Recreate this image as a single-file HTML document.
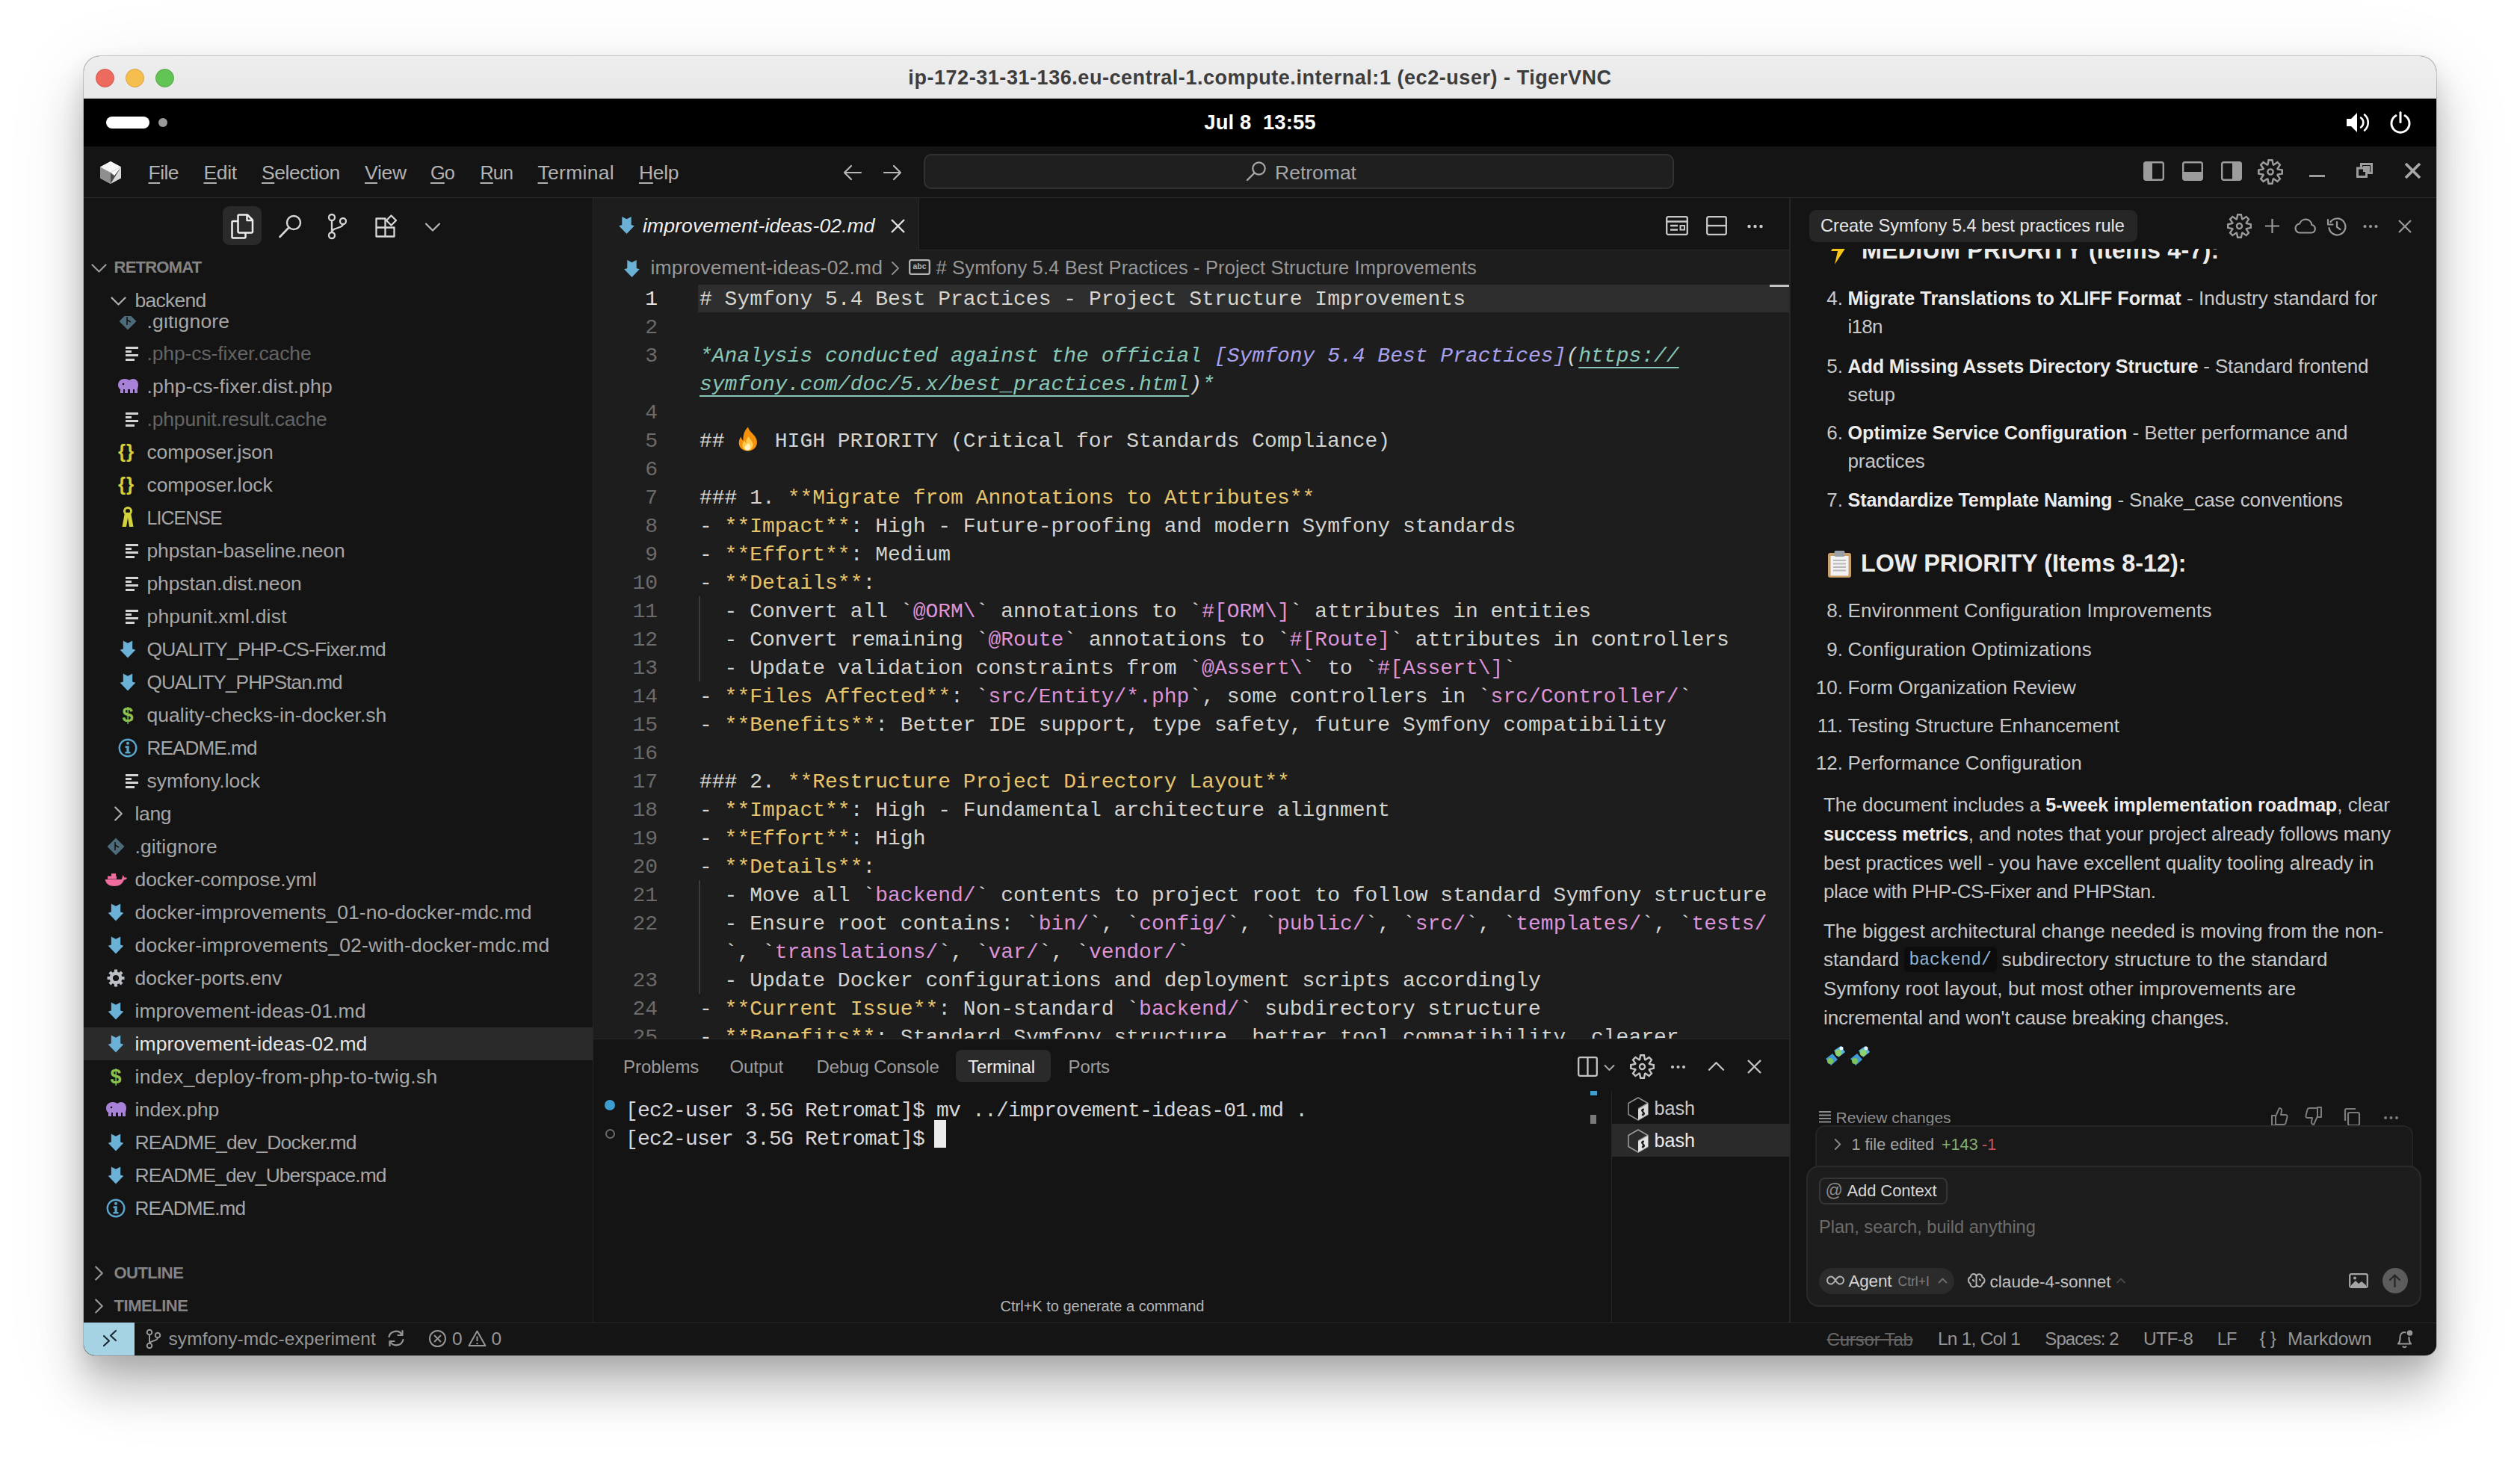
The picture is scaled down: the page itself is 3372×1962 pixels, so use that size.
<!DOCTYPE html>
<html lang="en"><head><meta charset="utf-8"><title>Retromat - Cursor</title>
<style>
html,body{margin:0;padding:0;}
body{width:3372px;height:1962px;overflow:hidden;background:#fff;position:relative;font-family:'Liberation Sans', 'DejaVu Sans', sans-serif;}
*{box-sizing:border-box;}
.abs{position:absolute;}
#win{position:absolute;left:112px;top:75px;width:3148px;height:1739px;border-radius:22px 22px 15px 15px;background:#141414;
 box-shadow:0 0 0 1px rgba(0,0,0,.16),0 45px 60px rgba(0,0,0,.20),0 15px 30px rgba(0,0,0,.11),0 25px 110px rgba(0,0,0,.10);}
#clip{position:absolute;left:0;top:0;width:100%;height:100%;border-radius:22px 22px 15px 15px;overflow:hidden;}
#pg{position:absolute;left:-112px;top:-75px;width:3372px;height:1962px;}
.t{position:absolute;white-space:pre;}
svg{position:absolute;overflow:visible;}
u{text-decoration:underline;text-underline-offset:4px;text-decoration-thickness:2px;}
.cl{position:absolute;overflow:hidden;}
</style></head><body>
<div id="win"><div id="clip"><div id="pg">
<div class="abs" style="left:112px;top:75px;width:3148px;height:57px;background:linear-gradient(#eeedee,#e9e8e9);"></div>
<div class="abs" style="left:112px;top:131px;width:3148px;height:1px;background:#d0cfd0;"></div>
<div class="abs" style="left:127.5px;top:91.5px;width:25px;height:25px;border-radius:50%;background:#ed6a5f;border:1px solid #d5554b;"></div>
<div class="abs" style="left:167.5px;top:91.5px;width:25px;height:25px;border-radius:50%;background:#f5be4f;border:1px solid #d9a33e;"></div>
<div class="abs" style="left:207.5px;top:91.5px;width:25px;height:25px;border-radius:50%;background:#62c454;border:1px solid #51a743;"></div>
<div class="t" style="left:112px;width:3148px;top:84px;text-align:center;font-size:27px;line-height:40px;font-weight:bold;color:#3d3d3d;letter-spacing:0.55px;">ip-172-31-31-136.eu-central-1.compute.internal:1 (ec2-user) - TigerVNC</div>
<div class="abs" style="left:112px;top:132px;width:3148px;height:64px;background:#000;"></div>
<div class="abs" style="left:142px;top:156px;width:58px;height:16px;background:#fff;border-radius:8px;"></div>
<div class="abs" style="left:212px;top:158px;width:12px;height:12px;border-radius:50%;background:#9a9a9a;"></div>
<div class="t" style="left:112px;width:3148px;top:144px;text-align:center;font-size:27.500px;line-height:40px;font-weight:bold;color:#fff;letter-spacing:0.1px;word-spacing:0px;">Jul 8  13:55</div>
<svg style="left:3137px;top:148px;" width="40" height="32" viewBox="0 0 40 32" fill="none"><path d="M3 11h6l8-8v26l-8-8H3z" fill="#fff"/>
<path d="M22 9.5a8 8 0 0 1 0 13" stroke="#fff" stroke-width="2.6" stroke-linecap="round"/>
<path d="M27 5.5a14 14 0 0 1 0 21" stroke="#fff" stroke-width="2.6" stroke-linecap="round"/></svg>
<svg style="left:3196px;top:148px;" width="32" height="32" viewBox="0 0 32 32" fill="none"><path d="M10 6.8a12 12 0 1 0 12 0" stroke="#fff" stroke-width="3" stroke-linecap="round"/>
<path d="M16 2.5v13" stroke="#fff" stroke-width="3" stroke-linecap="round"/></svg>
<div class="abs" style="left:112px;top:196px;width:3148px;height:68px;background:#141414;"></div>
<div class="abs" style="left:112px;top:264px;width:3148px;height:1px;background:#2a2a2a;"></div>
<svg style="left:133px;top:215px;" width="30" height="32" viewBox="0 0 30 32" fill="none"><path d="M15 1L29 8.5V23.5L15 31L1 23.5V8.5z" fill="#d9d9d9"/>
<path d="M15 1L29 8.5L15 16L1 8.5z" fill="#f4f4f4"/>
<path d="M1 8.5L15 16V31L1 23.5z" fill="#8f8f8f"/>
<path d="M15 16L29 8.5L15 31z" fill="#4a4a4a"/>
<path d="M15 16L29 8.5L20 20z" fill="#fff"/></svg>
<div class="t " style="left:198.5px;top:212.5px;font-size:26.50px;line-height:37px;color:#b2b2b2;letter-spacing:-0.551px;"><u>F</u>ile</div>
<div class="t " style="left:272.5px;top:212.5px;font-size:26.50px;line-height:37px;color:#b2b2b2;letter-spacing:-0.322px;"><u>E</u>dit</div>
<div class="t " style="left:350px;top:212.5px;font-size:26.50px;line-height:37px;color:#b2b2b2;letter-spacing:-0.470px;"><u>S</u>election</div>
<div class="t " style="left:488px;top:212.5px;font-size:26.50px;line-height:37px;color:#b2b2b2;letter-spacing:-0.242px;"><u>V</u>iew</div>
<div class="t " style="left:576px;top:212.5px;font-size:25.32px;line-height:37px;color:#b2b2b2;letter-spacing:-0.900px;"><u>G</u>o</div>
<div class="t " style="left:642.5px;top:212.5px;font-size:25.23px;line-height:37px;color:#b2b2b2;letter-spacing:-0.900px;"><u>R</u>un</div>
<div class="t " style="left:719.5px;top:212.5px;font-size:26.50px;line-height:37px;color:#b2b2b2;letter-spacing:0.270px;"><u>T</u>erminal</div>
<div class="t " style="left:855px;top:212.5px;font-size:26.50px;line-height:37px;color:#b2b2b2;letter-spacing:-0.329px;"><u>H</u>elp</div>
<svg style="left:0;top:0" width="1" height="1"><path d="M1152 231H1130M1139 222L1130 231L1139 240" stroke="#b8b8b8" stroke-width="2.2" fill="none" stroke-linecap="round" stroke-linejoin="round"/></svg>
<svg style="left:0;top:0" width="1" height="1"><path d="M1183 231H1205M1196 222L1205 231L1196 240" stroke="#b8b8b8" stroke-width="2.2" fill="none" stroke-linecap="round" stroke-linejoin="round"/></svg>
<div class="abs" style="left:1236px;top:206px;width:1004px;height:47px;border-radius:10px;background:#1f1f1f;border:2px solid #313131;"></div>
<svg style="left:1666px;top:214px;" width="30" height="30" viewBox="0 0 30 30" fill="none"><circle cx="18.5" cy="11.5" r="8.2" stroke="#a8a8a8" stroke-width="2.2"/><path d="M12.5 17.5L3 27" stroke="#a8a8a8" stroke-width="2.4" stroke-linecap="round"/></svg>
<div class="t " style="left:1706px;top:212.5px;font-size:26.5px;line-height:37px;color:#a6a6a6;">Retromat</div>
<svg style="left:2868px;top:216px;" width="28" height="26" viewBox="0 0 28 26" fill="none"><rect x="1.2" y="1.2" width="25.6" height="23.6" rx="2.5" stroke="#9c9c9c" stroke-width="2.4"/><rect x="1" y="1" width="11" height="24" fill="#9c9c9c"/></svg>
<svg style="left:2920px;top:216px;" width="28" height="26" viewBox="0 0 28 26" fill="none"><rect x="1.2" y="1.2" width="25.6" height="23.6" rx="2.5" stroke="#9c9c9c" stroke-width="2.4"/><rect x="1" y="14" width="26" height="11" fill="#9c9c9c"/></svg>
<svg style="left:2972px;top:216px;" width="28" height="26" viewBox="0 0 28 26" fill="none"><rect x="1.2" y="1.2" width="25.6" height="23.6" rx="2.5" stroke="#9c9c9c" stroke-width="2.4"/><rect x="15" y="1" width="12" height="24" fill="#9c9c9c"/></svg>
<svg style="left:3021.0px;top:213.0px;" width="34" height="34" viewBox="0 0 24 24" fill="none"><path d="M19.85 8.75l4.15.83v4.84l-4.15.83 2.35 3.52-3.43 3.43-3.52-2.35-.83 4.15H9.58l-.83-4.15-3.52 2.35-3.43-3.43 2.35-3.52L0 14.42V9.58l4.15-.83L1.8 5.23 5.23 1.8l3.52 2.35L9.58 0h4.84l.83 4.15 3.52-2.35 3.43 3.43-2.35 3.52zm-1.57 5.07l4-.81v-2l-4-.81-.54-1.3 2.29-3.43-1.43-1.43-3.43 2.29-1.3-.54-.81-4h-2l-.81 4-1.3.54-3.43-2.29-1.43 1.43L6.38 8.9l-.54 1.3-4 .81v2l4 .81.54 1.3-2.29 3.43 1.43 1.43 3.43-2.29 1.3.54.81 4h2l.81-4 1.3-.54 3.43 2.29 1.43-1.43-2.29-3.43.54-1.3zm-8.186-4.672A3.43 3.43 0 0 1 12 8.57 3.44 3.44 0 0 1 15.43 12a3.43 3.43 0 1 1-5.336-2.852zm.956 4.274c.281.188.612.288.95.288A1.7 1.7 0 0 0 13.71 12a1.71 1.71 0 1 0-2.66 1.422z" fill="#9c9c9c"/></svg>
<div class="abs" style="left:3090px;top:234px;width:20.5px;height:3px;background:#9c9c9c;"></div>
<svg style="left:3153px;top:217.5px;" width="22" height="20" viewBox="0 0 22 20" fill="none"><rect x="1.500" y="7" width="12" height="11.500" stroke="#9c9c9c" stroke-width="3"/><path d="M6.500 6V1.500h14v12h-6" stroke="#9c9c9c" stroke-width="3"/><rect x="9" y="4" width="9" height="8" fill="#9c9c9c"/></svg>
<svg style="left:3218.5px;top:218.5px;" width="19.0" height="19.0" viewBox="0 0 19.0 19.0" fill="none"><path d="M0 0L19.0 19.0M19.0 0L0 19.0" stroke="#a8a8a8" stroke-width="3.8" stroke-linecap="butt"/></svg>
<div class="abs" style="left:112px;top:265px;width:681px;height:1505px;background:#141414;"></div>
<div class="abs" style="left:793px;top:265px;width:2px;height:1505px;background:#262626;"></div>
<div class="abs" style="left:298px;top:276px;width:52px;height:52px;background:#2a2a2a;border-radius:9px;"></div>
<svg style="left:307px;top:285px;" width="34" height="36" viewBox="0 0 34 36" fill="none"><path d="M13 2.5h11l7 7v15.5a1.5 1.5 0 0 1-1.500 1.5H13a1.5 1.500 0 0 1-1.500-1.500V4a1.500 1.500 0 0 1 1.500-1.500z" stroke="#ededed" stroke-width="2.500" stroke-linejoin="round"/>
<path d="M23.500 3v7h7" stroke="#ededed" stroke-width="2.500" stroke-linejoin="round"/>
<path d="M11 11H5a1.500 1.500 0 0 0-1.500 1.500V32a1.500 1.500 0 0 0 1.500 1.500h15a1.500 1.500 0 0 0 1.500-1.500v-5" stroke="#ededed" stroke-width="2.500" stroke-linejoin="round"/></svg>
<svg style="left:372px;top:286px;" width="34" height="34" viewBox="0 0 34 34" fill="none"><circle cx="21" cy="12" r="9" stroke="#d6d6d6" stroke-width="2.400"/><path d="M14.500 18.500L2.500 31" stroke="#d6d6d6" stroke-width="2.600" stroke-linecap="round"/></svg>
<svg style="left:438px;top:286px;" width="28" height="34" viewBox="0 0 28 34" fill="none"><circle cx="6" cy="5" r="4" stroke="#d6d6d6" stroke-width="2.300"/><circle cx="6" cy="29" r="4" stroke="#d6d6d6" stroke-width="2.300"/><circle cx="21" cy="10" r="4" stroke="#d6d6d6" stroke-width="2.300"/>
<path d="M6 9v16M21 14c0 6-15 4-15 11" stroke="#d6d6d6" stroke-width="2.300"/></svg>
<svg style="left:502px;top:287px;" width="30" height="30" viewBox="0 0 30 30" fill="none"><path d="M1.500 5.500h12v24h-12zM1.500 17.500h24v12h-24zM13.500 17.500v12" stroke="#d6d6d6" stroke-width="2.300" stroke-linejoin="round"/>
<path d="M21.500 1.500l6.500 6.500-6.500 6.500-6.500-6.500z" stroke="#d6d6d6" stroke-width="2.300" stroke-linejoin="round"/></svg>
<svg style="left:0;top:0" width="1" height="1"><path d="M570 299.5L579 308.5L588 299.5" stroke="#b8b8b8" stroke-width="2.2" fill="none" stroke-linecap="round" stroke-linejoin="round"/></svg>
<div class="cl" style="left:112px;top:423px;width:681px;height:30px;"><div style="position:absolute;left:-112px;top:-423px;">
<svg style="left:0;top:0" width="1" height="1"><path d="M171 418.5L182.5 430L171 441.5L159.5 430z" fill="#4e6b79"/><path d="M170 424v11M170 428l5 3" stroke="#141414" stroke-width="1.600" fill="none"/></svg>
<div class="t " style="left:196.5px;top:411.5px;font-size:26.50px;line-height:37px;color:#a6a6a6;letter-spacing:0.168px;">.gitignore</div>
</div></div>
<div class="abs" style="left:167.5px;top:463.5px;width:17.0px;height:3.0px;background:#d4d4d4;"></div>
<div class="abs" style="left:167.5px;top:468.5px;width:8.0px;height:3.0px;background:#d4d4d4;"></div>
<div class="abs" style="left:167.5px;top:473.5px;width:17.0px;height:3.0px;background:#d4d4d4;"></div>
<div class="abs" style="left:167.5px;top:479.5px;width:12.5px;height:3.0px;background:#d4d4d4;"></div>
<div class="t " style="left:196.5px;top:454.5px;font-size:26.50px;line-height:37px;color:#646464;letter-spacing:-0.121px;">.php-cs-fixer.cache</div>
<svg style="left:156px;top:506px;" width="30" height="22" viewBox="0 0 30 22" fill="none"><path d="M2 9c0-5 4-8 9-8 3 0 5 1 6 2 1-1 3-2 5-2 4 0 7 3 7 8 0 3-1 4-1 6v5h-4v-5h-2v5h-4v-5c-1 0-2 0-3 0v5H11v-5H9v5H5v-5c-2-1-3-3-3-6z" fill="#a882d8"/><circle cx="9" cy="8" r="1.300" fill="#141414"/></svg>
<div class="t " style="left:196.5px;top:498.5px;font-size:26.50px;line-height:37px;color:#a6a6a6;letter-spacing:0.172px;">.php-cs-fixer.dist.php</div>
<div class="abs" style="left:167.5px;top:551.5px;width:17.0px;height:3.0px;background:#d4d4d4;"></div>
<div class="abs" style="left:167.5px;top:556.5px;width:8.0px;height:3.0px;background:#d4d4d4;"></div>
<div class="abs" style="left:167.5px;top:561.5px;width:17.0px;height:3.0px;background:#d4d4d4;"></div>
<div class="abs" style="left:167.5px;top:567.5px;width:12.5px;height:3.0px;background:#d4d4d4;"></div>
<div class="t " style="left:196.5px;top:542.5px;font-size:26.50px;line-height:37px;color:#646464;letter-spacing:-0.164px;">.phpunit.result.cache</div>
<div class="t " style="left:158px;top:586.0px;font-size:26px;line-height:36px;color:#d6cf3d;font-weight:bold;letter-spacing:1px;">{}</div>
<div class="t " style="left:196.5px;top:586.5px;font-size:26.50px;line-height:37px;color:#a6a6a6;letter-spacing:-0.144px;">composer.json</div>
<div class="t " style="left:158px;top:630.0px;font-size:26px;line-height:36px;color:#d6cf3d;font-weight:bold;letter-spacing:1px;">{}</div>
<div class="t " style="left:196.5px;top:630.5px;font-size:26.50px;line-height:37px;color:#a6a6a6;letter-spacing:-0.099px;">composer.lock</div>
<svg style="left:161px;top:678px;" width="20" height="30" viewBox="0 0 20 30" fill="none"><circle cx="10" cy="6" r="4.500" stroke="#d4d23c" stroke-width="3"/>
<path d="M6 8L2.500 27h5.500L10 15l2 12h5.500L14 8z" fill="#d4d23c"/></svg>
<div class="t " style="left:196.5px;top:674.5px;font-size:24.91px;line-height:37px;color:#a6a6a6;letter-spacing:-0.900px;">LICENSE</div>
<div class="abs" style="left:167.5px;top:727.5px;width:17.0px;height:3.0px;background:#d4d4d4;"></div>
<div class="abs" style="left:167.5px;top:732.5px;width:8.0px;height:3.0px;background:#d4d4d4;"></div>
<div class="abs" style="left:167.5px;top:737.5px;width:17.0px;height:3.0px;background:#d4d4d4;"></div>
<div class="abs" style="left:167.5px;top:743.5px;width:12.5px;height:3.0px;background:#d4d4d4;"></div>
<div class="t " style="left:196.5px;top:718.5px;font-size:26.50px;line-height:37px;color:#a6a6a6;letter-spacing:-0.151px;">phpstan-baseline.neon</div>
<div class="abs" style="left:167.5px;top:771.5px;width:17.0px;height:3.0px;background:#d4d4d4;"></div>
<div class="abs" style="left:167.5px;top:776.5px;width:8.0px;height:3.0px;background:#d4d4d4;"></div>
<div class="abs" style="left:167.5px;top:781.5px;width:17.0px;height:3.0px;background:#d4d4d4;"></div>
<div class="abs" style="left:167.5px;top:787.5px;width:12.5px;height:3.0px;background:#d4d4d4;"></div>
<div class="t " style="left:196.5px;top:762.5px;font-size:26.50px;line-height:37px;color:#a6a6a6;letter-spacing:-0.119px;">phpstan.dist.neon</div>
<div class="abs" style="left:167.5px;top:815.5px;width:17.0px;height:3.0px;background:#d4d4d4;"></div>
<div class="abs" style="left:167.5px;top:820.5px;width:8.0px;height:3.0px;background:#d4d4d4;"></div>
<div class="abs" style="left:167.5px;top:825.5px;width:17.0px;height:3.0px;background:#d4d4d4;"></div>
<div class="abs" style="left:167.5px;top:831.5px;width:12.5px;height:3.0px;background:#d4d4d4;"></div>
<div class="t " style="left:196.5px;top:806.5px;font-size:26.50px;line-height:37px;color:#a6a6a6;letter-spacing:0.192px;">phpunit.xml.dist</div>
<svg style="left:0;top:0" width="1" height="1"><path d="M164.8 857.5L171 860.8L177.2 857.5L177.2 868.5L181.3 869.8L171 880.5L160.7 869.8L164.8 868.5z" fill="#6bb1d6"/></svg>
<div class="t " style="left:196.5px;top:850.5px;font-size:26.50px;line-height:37px;color:#a6a6a6;letter-spacing:-0.834px;">QUALITY_PHP-CS-Fixer.md</div>
<svg style="left:0;top:0" width="1" height="1"><path d="M164.8 901.5L171 904.8L177.2 901.5L177.2 912.5L181.3 913.8L171 924.5L160.7 913.8L164.8 912.5z" fill="#6bb1d6"/></svg>
<div class="t " style="left:196.5px;top:894.5px;font-size:26.13px;line-height:37px;color:#a6a6a6;letter-spacing:-0.900px;">QUALITY_PHPStan.md</div>
<div class="t " style="left:163.5px;top:938.5px;font-size:27px;line-height:37px;color:#8dc149;font-weight:bold;">$</div>
<div class="t " style="left:196.5px;top:938.5px;font-size:26.50px;line-height:37px;color:#a6a6a6;letter-spacing:0.048px;">quality-checks-in-docker.sh</div>
<svg style="left:158px;top:988px;" width="26" height="26" viewBox="0 0 26 26" fill="none"><circle cx="13" cy="13" r="11.300" stroke="#5aa6cf" stroke-width="2.400"/><rect x="11.400" y="10.500" width="3.200" height="9.500" fill="#5aa6cf"/><rect x="9.500" y="10.500" width="5" height="2.400" fill="#5aa6cf"/><rect x="9.500" y="18" width="7" height="2.400" fill="#5aa6cf"/><circle cx="13" cy="6.800" r="2" fill="#5aa6cf"/></svg>
<div class="t " style="left:196.5px;top:982.5px;font-size:26.10px;line-height:37px;color:#a6a6a6;letter-spacing:-0.900px;">README.md</div>
<div class="abs" style="left:167.5px;top:1035.5px;width:17.0px;height:3.0px;background:#d4d4d4;"></div>
<div class="abs" style="left:167.5px;top:1040.5px;width:8.0px;height:3.0px;background:#d4d4d4;"></div>
<div class="abs" style="left:167.5px;top:1045.5px;width:17.0px;height:3.0px;background:#d4d4d4;"></div>
<div class="abs" style="left:167.5px;top:1051.5px;width:12.5px;height:3.0px;background:#d4d4d4;"></div>
<div class="t " style="left:196.5px;top:1026.5px;font-size:26.50px;line-height:37px;color:#a6a6a6;letter-spacing:0.018px;">symfony.lock</div>
<svg style="left:0;top:0" width="1" height="1"><path d="M154.25 1080.5L162.75 1089L154.25 1097.5" stroke="#b0b0b0" stroke-width="2.2" fill="none" stroke-linecap="round" stroke-linejoin="round"/></svg>
<div class="t " style="left:180.5px;top:1070.5px;font-size:26.50px;line-height:37px;color:#a6a6a6;letter-spacing:-0.352px;">lang</div>
<svg style="left:0;top:0" width="1" height="1"><path d="M155 1121.5L166.5 1133L155 1144.5L143.5 1133z" fill="#4e6b79"/><path d="M154 1127v11M154 1131l5 3" stroke="#141414" stroke-width="1.600" fill="none"/></svg>
<div class="t " style="left:180.5px;top:1114.5px;font-size:26.50px;line-height:37px;color:#a6a6a6;letter-spacing:0.128px;">.gitignore</div>
<svg style="left:140px;top:1167px;" width="30" height="20" viewBox="0 0 30 20" fill="none"><path d="M0.500 10h22c1-2 2-4 1.500-6 1 0.500 2 2 2.500 3.500 1.500-0.500 2.500 0 3.500 0.500-1 2-2.500 2.500-4 2.500-2 5-6 8.500-13 8.500-7 0-11-3-12.500-9z" fill="#ee6c9e"/>
<rect x="9" y="2" width="6" height="7" fill="#ee6c9e"/><rect x="4" y="5.500" width="12" height="4" fill="#ee6c9e"/></svg>
<div class="t " style="left:180.5px;top:1158.5px;font-size:26.50px;line-height:37px;color:#a6a6a6;letter-spacing:-0.076px;">docker-compose.yml</div>
<svg style="left:0;top:0" width="1" height="1"><path d="M148.8 1209.5L155 1212.8L161.2 1209.5L161.2 1220.5L165.3 1221.8L155 1232.5L144.7 1221.8L148.8 1220.5z" fill="#6bb1d6"/></svg>
<div class="t " style="left:180.5px;top:1202.5px;font-size:26.50px;line-height:37px;color:#a6a6a6;letter-spacing:0.061px;">docker-improvements_01-no-docker-mdc.md</div>
<svg style="left:0;top:0" width="1" height="1"><path d="M148.8 1253.5L155 1256.8L161.2 1253.5L161.2 1264.5L165.3 1265.8L155 1276.5L144.7 1265.8L148.8 1264.5z" fill="#6bb1d6"/></svg>
<div class="t " style="left:180.5px;top:1246.5px;font-size:26.50px;line-height:37px;color:#a6a6a6;letter-spacing:0.208px;">docker-improvements_02-with-docker-mdc.md</div>
<svg style="left:143px;top:1297px;" width="24" height="24" viewBox="0 0 24 24" fill="none"><circle cx="12" cy="12" r="6.300" stroke="#b9bfc4" stroke-width="4.400"/>
<g stroke="#b9bfc4" stroke-width="4.200"><path d="M12 0.500v4M12 19.500v4M0.500 12h4M19.500 12h4M3.900 3.900l2.800 2.800M17.300 17.300l2.800 2.800M3.900 20.100l2.800-2.800M17.300 6.700l2.800-2.800"/></g></svg>
<div class="t " style="left:180.5px;top:1290.5px;font-size:26.50px;line-height:37px;color:#a6a6a6;letter-spacing:-0.036px;">docker-ports.env</div>
<svg style="left:0;top:0" width="1" height="1"><path d="M148.8 1341.5L155 1344.8L161.2 1341.5L161.2 1352.5L165.3 1353.8L155 1364.5L144.7 1353.8L148.8 1352.5z" fill="#6bb1d6"/></svg>
<div class="t " style="left:180.5px;top:1334.5px;font-size:26.50px;line-height:37px;color:#a6a6a6;letter-spacing:0.051px;">improvement-ideas-01.md</div>
<div class="abs" style="left:112px;top:1375px;width:681px;height:44px;background:#2a2a2a;"></div>
<svg style="left:0;top:0" width="1" height="1"><path d="M148.8 1385.5L155 1388.8L161.2 1385.5L161.2 1396.5L165.3 1397.8L155 1408.5L144.7 1397.8L148.8 1396.5z" fill="#6bb1d6"/></svg>
<div class="t " style="left:180.5px;top:1378.5px;font-size:26.50px;line-height:37px;color:#e6e6e6;letter-spacing:0.138px;">improvement-ideas-02.md</div>
<div class="t " style="left:147.5px;top:1422.5px;font-size:27px;line-height:37px;color:#8dc149;font-weight:bold;">$</div>
<div class="t " style="left:180.5px;top:1422.5px;font-size:26.50px;line-height:37px;color:#a6a6a6;letter-spacing:0.372px;">index_deploy-from-php-to-twig.sh</div>
<svg style="left:140px;top:1474px;" width="30" height="22" viewBox="0 0 30 22" fill="none"><path d="M2 9c0-5 4-8 9-8 3 0 5 1 6 2 1-1 3-2 5-2 4 0 7 3 7 8 0 3-1 4-1 6v5h-4v-5h-2v5h-4v-5c-1 0-2 0-3 0v5H11v-5H9v5H5v-5c-2-1-3-3-3-6z" fill="#a882d8"/><circle cx="9" cy="8" r="1.300" fill="#141414"/></svg>
<div class="t " style="left:180.5px;top:1466.5px;font-size:26.50px;line-height:37px;color:#a6a6a6;letter-spacing:-0.282px;">index.php</div>
<svg style="left:0;top:0" width="1" height="1"><path d="M148.8 1517.5L155 1520.8L161.2 1517.5L161.2 1528.5L165.3 1529.8L155 1540.5L144.7 1529.8L148.8 1528.5z" fill="#6bb1d6"/></svg>
<div class="t " style="left:180.5px;top:1510.5px;font-size:26.50px;line-height:37px;color:#a6a6a6;letter-spacing:-0.802px;">README_dev_Docker.md</div>
<svg style="left:0;top:0" width="1" height="1"><path d="M148.8 1561.5L155 1564.8L161.2 1561.5L161.2 1572.5L165.3 1573.8L155 1584.5L144.7 1573.8L148.8 1572.5z" fill="#6bb1d6"/></svg>
<div class="t " style="left:180.5px;top:1554.5px;font-size:26.43px;line-height:37px;color:#a6a6a6;letter-spacing:-0.900px;">README_dev_Uberspace.md</div>
<svg style="left:142px;top:1604px;" width="26" height="26" viewBox="0 0 26 26" fill="none"><circle cx="13" cy="13" r="11.300" stroke="#5aa6cf" stroke-width="2.400"/><rect x="11.400" y="10.500" width="3.200" height="9.500" fill="#5aa6cf"/><rect x="9.500" y="10.500" width="5" height="2.400" fill="#5aa6cf"/><rect x="9.500" y="18" width="7" height="2.400" fill="#5aa6cf"/><circle cx="13" cy="6.800" r="2" fill="#5aa6cf"/></svg>
<div class="t " style="left:180.5px;top:1598.5px;font-size:26.19px;line-height:37px;color:#a6a6a6;letter-spacing:-0.900px;">README.md</div>
<svg style="left:0;top:0" width="1" height="1"><path d="M123.5 354.5L132.5 363.5L141.5 354.5" stroke="#9a9a9a" stroke-width="2.2" fill="none" stroke-linecap="round" stroke-linejoin="round"/></svg>
<div class="t " style="left:152.5px;top:343.0px;font-size:22.00px;line-height:30px;color:#848484;font-weight:bold;letter-spacing:-0.754px;">RETROMAT</div>
<svg style="left:0;top:0" width="1" height="1"><path d="M149.5 398.5L158.5 407.5L167.5 398.5" stroke="#b0b0b0" stroke-width="2.2" fill="none" stroke-linecap="round" stroke-linejoin="round"/></svg>
<div class="t " style="left:180.5px;top:383.5px;font-size:26.50px;line-height:37px;color:#a6a6a6;letter-spacing:-0.743px;">backend</div>
<svg style="left:0;top:0" width="1" height="1"><path d="M128.25 1695.5L136.75 1704L128.25 1712.5" stroke="#9a9a9a" stroke-width="2.2" fill="none" stroke-linecap="round" stroke-linejoin="round"/></svg>
<div class="t " style="left:152.5px;top:1689.0px;font-size:22.00px;line-height:30px;color:#848484;font-weight:bold;letter-spacing:-0.538px;">OUTLINE</div>
<svg style="left:0;top:0" width="1" height="1"><path d="M128.25 1739.5L136.75 1748L128.25 1756.5" stroke="#9a9a9a" stroke-width="2.2" fill="none" stroke-linecap="round" stroke-linejoin="round"/></svg>
<div class="t " style="left:152.5px;top:1733.0px;font-size:22.00px;line-height:30px;color:#848484;font-weight:bold;letter-spacing:-0.459px;">TIMELINE</div>
<div class="abs" style="left:794px;top:265px;width:1601px;height:1125px;background:#1d1d1d;"></div>
<div class="abs" style="left:1229px;top:265px;width:1166px;height:70px;background:#141414;"></div>
<div class="abs" style="left:1229px;top:265px;width:1px;height:70px;background:#2a2a2a;"></div>
<div class="abs" style="left:1230px;top:334px;width:1165px;height:1px;background:#2a2a2a;"></div>
<svg style="left:0;top:0" width="1" height="1"><path d="M832.3 290.0L838.5 293.3L844.7 290.0L844.7 301.0L848.8 302.3L838.5 313.0L828.2 302.3L832.3 301.0z" fill="#6bb1d6"/></svg>
<div class="t " style="left:860px;top:283.5px;font-size:26.50px;line-height:37px;color:#f0f0f0;font-style:italic;letter-spacing:0.125px;">improvement-ideas-02.md</div>
<svg style="left:1192.5px;top:294.0px;" width="17.0" height="17.0" viewBox="0 0 17.0 17.0" fill="none"><path d="M0 0L17.0 17.0M17.0 0L0 17.0" stroke="#e0e0e0" stroke-width="2.4" stroke-linecap="butt"/></svg>
<svg style="left:2229px;top:289px;" width="30" height="26" viewBox="0 0 30 26" fill="none"><rect x="1.200" y="1.200" width="27.600" height="23.600" rx="2" stroke="#c8c8c8" stroke-width="2.300"/>
<path d="M1 7.500h28M6 13h10M6 18.500h10" stroke="#c8c8c8" stroke-width="2.300"/><rect x="19.500" y="13" width="5.500" height="5.500" stroke="#c8c8c8" stroke-width="2"/></svg>
<svg style="left:2283px;top:289px;" width="28" height="26" viewBox="0 0 28 26" fill="none"><rect x="1.200" y="1.200" width="25.600" height="23.600" rx="2" stroke="#c8c8c8" stroke-width="2.300"/><path d="M1 13h26" stroke="#c8c8c8" stroke-width="2.300"/></svg>
<svg style="left:0;top:0" width="1" height="1"><circle cx="2340.5" cy="303" r="2.2" fill="#c8c8c8"/><circle cx="2348.5" cy="303" r="2.2" fill="#c8c8c8"/><circle cx="2356.5" cy="303" r="2.2" fill="#c8c8c8"/></svg>
<svg style="left:0;top:0" width="1" height="1"><path d="M839.3 348.0L845.5 351.3L851.7 348.0L851.7 359.0L855.8 360.3L845.5 371.0L835.2 360.3L839.3 359.0z" fill="#6bb1d6"/></svg>
<div class="t " style="left:870.5px;top:340.0px;font-size:26.50px;line-height:37px;color:#989898;letter-spacing:0.116px;">improvement-ideas-02.md</div>
<svg style="left:0;top:0" width="1" height="1"><path d="M1194.0 351L1202.0 359L1194.0 367" stroke="#8c8c8c" stroke-width="2" fill="none" stroke-linecap="round" stroke-linejoin="round"/></svg>
<svg style="left:1216px;top:346.5px;" width="29" height="21" viewBox="0 0 29 21" fill="none"><rect x="1.200" y="1.200" width="26.600" height="18.600" rx="2" stroke="#b4b4b4" stroke-width="2.300"/></svg>
<div class="t " style="left:1221.5px;top:349.0px;font-size:10.5px;line-height:14px;color:#b4b4b4;font-weight:bold;">abc</div>
<div class="t " style="left:1252.5px;top:341.0px;font-size:25.50px;line-height:35px;color:#989898;letter-spacing:0.151px;"># Symfony 5.4 Best Practices - Project Structure Improvements</div>
<div class="abs" style="left:934px;top:380.5px;width:1461px;height:37.5px;background:#2e2e2e;"></div>
<div class="cl" style="left:794px;top:380px;width:1601px;height:1010px;"><div style="position:absolute;left:-794px;top:-380px;">
<div class="t" style="left:780px;width:100px;text-align:right;top:382px;font-family:'Liberation Mono', 'DejaVu Sans Mono', monospace;font-size:28px;line-height:38px;color:#e6e6e6;">1</div>
<div class="t" style="left:780px;width:100px;text-align:right;top:420px;font-family:'Liberation Mono', 'DejaVu Sans Mono', monospace;font-size:28px;line-height:38px;color:#6b6b6b;">2</div>
<div class="t" style="left:780px;width:100px;text-align:right;top:458px;font-family:'Liberation Mono', 'DejaVu Sans Mono', monospace;font-size:28px;line-height:38px;color:#6b6b6b;">3</div>
<div class="t" style="left:780px;width:100px;text-align:right;top:534px;font-family:'Liberation Mono', 'DejaVu Sans Mono', monospace;font-size:28px;line-height:38px;color:#6b6b6b;">4</div>
<div class="t" style="left:780px;width:100px;text-align:right;top:572px;font-family:'Liberation Mono', 'DejaVu Sans Mono', monospace;font-size:28px;line-height:38px;color:#6b6b6b;">5</div>
<div class="t" style="left:780px;width:100px;text-align:right;top:610px;font-family:'Liberation Mono', 'DejaVu Sans Mono', monospace;font-size:28px;line-height:38px;color:#6b6b6b;">6</div>
<div class="t" style="left:780px;width:100px;text-align:right;top:648px;font-family:'Liberation Mono', 'DejaVu Sans Mono', monospace;font-size:28px;line-height:38px;color:#6b6b6b;">7</div>
<div class="t" style="left:780px;width:100px;text-align:right;top:686px;font-family:'Liberation Mono', 'DejaVu Sans Mono', monospace;font-size:28px;line-height:38px;color:#6b6b6b;">8</div>
<div class="t" style="left:780px;width:100px;text-align:right;top:724px;font-family:'Liberation Mono', 'DejaVu Sans Mono', monospace;font-size:28px;line-height:38px;color:#6b6b6b;">9</div>
<div class="t" style="left:780px;width:100px;text-align:right;top:762px;font-family:'Liberation Mono', 'DejaVu Sans Mono', monospace;font-size:28px;line-height:38px;color:#6b6b6b;">10</div>
<div class="t" style="left:780px;width:100px;text-align:right;top:800px;font-family:'Liberation Mono', 'DejaVu Sans Mono', monospace;font-size:28px;line-height:38px;color:#6b6b6b;">11</div>
<div class="t" style="left:780px;width:100px;text-align:right;top:838px;font-family:'Liberation Mono', 'DejaVu Sans Mono', monospace;font-size:28px;line-height:38px;color:#6b6b6b;">12</div>
<div class="t" style="left:780px;width:100px;text-align:right;top:876px;font-family:'Liberation Mono', 'DejaVu Sans Mono', monospace;font-size:28px;line-height:38px;color:#6b6b6b;">13</div>
<div class="t" style="left:780px;width:100px;text-align:right;top:914px;font-family:'Liberation Mono', 'DejaVu Sans Mono', monospace;font-size:28px;line-height:38px;color:#6b6b6b;">14</div>
<div class="t" style="left:780px;width:100px;text-align:right;top:952px;font-family:'Liberation Mono', 'DejaVu Sans Mono', monospace;font-size:28px;line-height:38px;color:#6b6b6b;">15</div>
<div class="t" style="left:780px;width:100px;text-align:right;top:990px;font-family:'Liberation Mono', 'DejaVu Sans Mono', monospace;font-size:28px;line-height:38px;color:#6b6b6b;">16</div>
<div class="t" style="left:780px;width:100px;text-align:right;top:1028px;font-family:'Liberation Mono', 'DejaVu Sans Mono', monospace;font-size:28px;line-height:38px;color:#6b6b6b;">17</div>
<div class="t" style="left:780px;width:100px;text-align:right;top:1066px;font-family:'Liberation Mono', 'DejaVu Sans Mono', monospace;font-size:28px;line-height:38px;color:#6b6b6b;">18</div>
<div class="t" style="left:780px;width:100px;text-align:right;top:1104px;font-family:'Liberation Mono', 'DejaVu Sans Mono', monospace;font-size:28px;line-height:38px;color:#6b6b6b;">19</div>
<div class="t" style="left:780px;width:100px;text-align:right;top:1142px;font-family:'Liberation Mono', 'DejaVu Sans Mono', monospace;font-size:28px;line-height:38px;color:#6b6b6b;">20</div>
<div class="t" style="left:780px;width:100px;text-align:right;top:1180px;font-family:'Liberation Mono', 'DejaVu Sans Mono', monospace;font-size:28px;line-height:38px;color:#6b6b6b;">21</div>
<div class="t" style="left:780px;width:100px;text-align:right;top:1218px;font-family:'Liberation Mono', 'DejaVu Sans Mono', monospace;font-size:28px;line-height:38px;color:#6b6b6b;">22</div>
<div class="t" style="left:780px;width:100px;text-align:right;top:1294px;font-family:'Liberation Mono', 'DejaVu Sans Mono', monospace;font-size:28px;line-height:38px;color:#6b6b6b;">23</div>
<div class="t" style="left:780px;width:100px;text-align:right;top:1332px;font-family:'Liberation Mono', 'DejaVu Sans Mono', monospace;font-size:28px;line-height:38px;color:#6b6b6b;">24</div>
<div class="t" style="left:780px;width:100px;text-align:right;top:1370px;font-family:'Liberation Mono', 'DejaVu Sans Mono', monospace;font-size:28px;line-height:38px;color:#6b6b6b;">25</div>
<div class="t" style="left:936.0px;top:382px;font-family:'Liberation Mono', 'DejaVu Sans Mono', monospace;font-size:28px;line-height:38px;color:#d4d4d0;"># Symfony 5.4 Best Practices - Project Structure Improvements</div>
<div class="t" style="left:936.0px;top:648px;font-family:'Liberation Mono', 'DejaVu Sans Mono', monospace;font-size:28px;line-height:38px;color:#d4d4d0;">### 1. <span style="color:#e6c46e">**Migrate from Annotations to Attributes**</span></div>
<div class="t" style="left:936.0px;top:686px;font-family:'Liberation Mono', 'DejaVu Sans Mono', monospace;font-size:28px;line-height:38px;color:#d4d4d0;">- <span style="color:#e6c46e">**Impact**</span>: High - Future-proofing and modern Symfony standards</div>
<div class="t" style="left:936.0px;top:724px;font-family:'Liberation Mono', 'DejaVu Sans Mono', monospace;font-size:28px;line-height:38px;color:#d4d4d0;">- <span style="color:#e6c46e">**Effort**</span>: Medium</div>
<div class="t" style="left:936.0px;top:762px;font-family:'Liberation Mono', 'DejaVu Sans Mono', monospace;font-size:28px;line-height:38px;color:#d4d4d0;">- <span style="color:#e6c46e">**Details**</span>:</div>
<div class="t" style="left:936.0px;top:800px;font-family:'Liberation Mono', 'DejaVu Sans Mono', monospace;font-size:28px;line-height:38px;color:#d4d4d0;">  - Convert all `<span style="color:#dc93d8">@ORM\</span>` annotations to `<span style="color:#dc93d8">#[ORM\]</span>` attributes in entities</div>
<div class="t" style="left:936.0px;top:838px;font-family:'Liberation Mono', 'DejaVu Sans Mono', monospace;font-size:28px;line-height:38px;color:#d4d4d0;">  - Convert remaining `<span style="color:#dc93d8">@Route</span>` annotations to `<span style="color:#dc93d8">#[Route]</span>` attributes in controllers</div>
<div class="t" style="left:936.0px;top:876px;font-family:'Liberation Mono', 'DejaVu Sans Mono', monospace;font-size:28px;line-height:38px;color:#d4d4d0;">  - Update validation constraints from `<span style="color:#dc93d8">@Assert\</span>` to `<span style="color:#dc93d8">#[Assert\]</span>`</div>
<div class="t" style="left:936.0px;top:914px;font-family:'Liberation Mono', 'DejaVu Sans Mono', monospace;font-size:28px;line-height:38px;color:#d4d4d0;">- <span style="color:#e6c46e">**Files Affected**</span>: `<span style="color:#dc93d8">src/Entity/*.php</span>`, some controllers in `<span style="color:#dc93d8">src/Controller/</span>`</div>
<div class="t" style="left:936.0px;top:952px;font-family:'Liberation Mono', 'DejaVu Sans Mono', monospace;font-size:28px;line-height:38px;color:#d4d4d0;">- <span style="color:#e6c46e">**Benefits**</span>: Better IDE support, type safety, future Symfony compatibility</div>
<div class="t" style="left:936.0px;top:1028px;font-family:'Liberation Mono', 'DejaVu Sans Mono', monospace;font-size:28px;line-height:38px;color:#d4d4d0;">### 2. <span style="color:#e6c46e">**Restructure Project Directory Layout**</span></div>
<div class="t" style="left:936.0px;top:1066px;font-family:'Liberation Mono', 'DejaVu Sans Mono', monospace;font-size:28px;line-height:38px;color:#d4d4d0;">- <span style="color:#e6c46e">**Impact**</span>: High - Fundamental architecture alignment</div>
<div class="t" style="left:936.0px;top:1104px;font-family:'Liberation Mono', 'DejaVu Sans Mono', monospace;font-size:28px;line-height:38px;color:#d4d4d0;">- <span style="color:#e6c46e">**Effort**</span>: High</div>
<div class="t" style="left:936.0px;top:1142px;font-family:'Liberation Mono', 'DejaVu Sans Mono', monospace;font-size:28px;line-height:38px;color:#d4d4d0;">- <span style="color:#e6c46e">**Details**</span>:</div>
<div class="t" style="left:936.0px;top:1180px;font-family:'Liberation Mono', 'DejaVu Sans Mono', monospace;font-size:28px;line-height:38px;color:#d4d4d0;">  - Move all `<span style="color:#dc93d8">backend/</span>` contents to project root to follow standard Symfony structure</div>
<div class="t" style="left:936.0px;top:1294px;font-family:'Liberation Mono', 'DejaVu Sans Mono', monospace;font-size:28px;line-height:38px;color:#d4d4d0;">  - Update Docker configurations and deployment scripts accordingly</div>
<div class="t" style="left:936.0px;top:1332px;font-family:'Liberation Mono', 'DejaVu Sans Mono', monospace;font-size:28px;line-height:38px;color:#d4d4d0;">- <span style="color:#e6c46e">**Current Issue**</span>: Non-standard `<span style="color:#dc93d8">backend/</span>` subdirectory structure</div>
<div class="t" style="left:936.0px;top:1370px;font-family:'Liberation Mono', 'DejaVu Sans Mono', monospace;font-size:28px;line-height:38px;color:#d4d4d0;">- <span style="color:#e6c46e">**Benefits**</span>: Standard Symfony structure, better tool compatibility, clearer</div>
<div class="t" style="left:936.0px;top:458px;font-family:'Liberation Mono', 'DejaVu Sans Mono', monospace;font-size:28px;line-height:38px;color:#d4d4d0;font-style:italic;"><span style="color:#88c7b7">*Analysis conducted against the official </span><span style="color:#a9a1ee">[Symfony 5.4 Best Practices]</span><span style="color:#d4d4d0">(</span><span style="color:#88c7b7;text-decoration:underline;text-underline-offset:7px;text-decoration-thickness:2px;">https://</span></div>
<div class="t" style="left:936.0px;top:496px;font-family:'Liberation Mono', 'DejaVu Sans Mono', monospace;font-size:28px;line-height:38px;color:#d4d4d0;font-style:italic;"><span style="color:#88c7b7;text-decoration:underline;text-underline-offset:7px;text-decoration-thickness:2px;">symfony.com/doc/5.x/best_practices.html</span><span style="color:#d4d4d0">)</span><span style="color:#88c7b7">*</span></div>
<div class="t" style="left:936.0px;top:572px;font-family:'Liberation Mono', 'DejaVu Sans Mono', monospace;font-size:28px;line-height:38px;color:#d4d4d0;">## </div>
<svg style="left:988px;top:571px;" width="28" height="33" viewBox="0 0 28 33" fill="none"><path d="M13 0.500c1 5 6 8 9.500 13 4 5.500 3 13-2 16.500-5 3.500-12 3.500-16.500-0.500C-0.500 25.500 0 18 3.500 13.500c0.500 2.500 1.500 4 3 5C6 12 8 5 13 0.500z" fill="#f4900c"/>
<path d="M14 13c0.500 3.500 4.500 5.500 5.500 10 0.800 3.500-1.500 7.500-5.500 8.500-4 0.800-8-1.500-8.500-5.500-0.500-3 1-5.500 3-7.500 0 2 0.800 3 2 3.500C10 18.500 11.500 15 14 13z" fill="#ffcc4d"/>
<path d="M13.500 22c2 2 3 4 2.500 6.500-0.500 2-2 3.500-4 3.500-2 0-3.500-1.500-3.500-3.500 0-2.500 3-4 5-6.500z" fill="#fff3c4"/></svg>
<div class="t" style="left:1036.8px;top:572px;font-family:'Liberation Mono', 'DejaVu Sans Mono', monospace;font-size:28px;line-height:38px;color:#d4d4d0;">HIGH PRIORITY (Critical for Standards Compliance)</div>
<div class="t" style="left:936.0px;top:1218px;font-family:'Liberation Mono', 'DejaVu Sans Mono', monospace;font-size:28px;line-height:38px;color:#d4d4d0;">  - Ensure root contains: `<span style="color:#dc93d8">bin/</span>`, `<span style="color:#dc93d8">config/</span>`, `<span style="color:#dc93d8">public/</span>`, `<span style="color:#dc93d8">src/</span>`, `<span style="color:#dc93d8">templates/</span>`, `<span style="color:#dc93d8">tests/</span></div>
<div class="t" style="left:969.6px;top:1256px;font-family:'Liberation Mono', 'DejaVu Sans Mono', monospace;font-size:28px;line-height:38px;color:#d4d4d0;">`, `<span style="color:#dc93d8">translations/</span>`, `<span style="color:#dc93d8">var/</span>`, `<span style="color:#dc93d8">vendor/</span>`</div>
<div class="abs" style="left:935px;top:798px;width:2px;height:114px;background:#3a3a3a;"></div>
<div class="abs" style="left:935px;top:1178px;width:2px;height:152px;background:#3a3a3a;"></div>
</div></div>
<div class="abs" style="left:2368px;top:381px;width:27px;height:3px;background:#c4c4c4;"></div>
<div class="abs" style="left:794px;top:1390px;width:1601px;height:380px;background:#141414;"></div>
<div class="abs" style="left:794px;top:1390px;width:1601px;height:1px;background:#2a2a2a;"></div>
<div class="abs" style="left:1278.5px;top:1405px;width:127.5px;height:42.5px;background:#2a2a2a;border-radius:8px;"></div>
<div class="t " style="left:834px;top:1410.5px;font-size:24px;line-height:33px;color:#9c9c9c;letter-spacing:0px;">Problems</div>
<div class="t " style="left:976.5px;top:1410.5px;font-size:24px;line-height:33px;color:#9c9c9c;letter-spacing:-0.1px;">Output</div>
<div class="t " style="left:1092.5px;top:1410.5px;font-size:24px;line-height:33px;color:#9c9c9c;letter-spacing:-0.1px;">Debug Console</div>
<div class="t " style="left:1295px;top:1410.5px;font-size:24px;line-height:33px;color:#ececec;letter-spacing:-0.1px;">Terminal</div>
<div class="t " style="left:1429.5px;top:1410.5px;font-size:24px;line-height:33px;color:#9c9c9c;letter-spacing:-0.1px;">Ports</div>
<svg style="left:2111px;top:1414px;" width="27" height="27" viewBox="0 0 27 27" fill="none"><rect x="1.200" y="1.200" width="24.600" height="24.600" rx="2" stroke="#c4c4c4" stroke-width="2.300"/><path d="M13.500 1v25" stroke="#c4c4c4" stroke-width="2.300"/></svg>
<svg style="left:0;top:0" width="1" height="1"><path d="M2147.5 1426.0L2153.5 1432.0L2159.5 1426.0" stroke="#a8a8a8" stroke-width="2" fill="none" stroke-linecap="round" stroke-linejoin="round"/></svg>
<svg style="left:2181.0px;top:1411.0px;" width="33" height="33" viewBox="0 0 24 24" fill="none"><path d="M19.85 8.75l4.15.83v4.84l-4.15.83 2.35 3.52-3.43 3.43-3.52-2.35-.83 4.15H9.58l-.83-4.15-3.52 2.35-3.43-3.43 2.35-3.52L0 14.42V9.58l4.15-.83L1.8 5.23 5.23 1.8l3.52 2.35L9.58 0h4.84l.83 4.15 3.52-2.35 3.43 3.43-2.35 3.52zm-1.57 5.07l4-.81v-2l-4-.81-.54-1.3 2.29-3.43-1.43-1.43-3.43 2.29-1.3-.54-.81-4h-2l-.81 4-1.3.54-3.43-2.29-1.43 1.43L6.38 8.9l-.54 1.3-4 .81v2l4 .81.54 1.3-2.29 3.43 1.43 1.43 3.43-2.29 1.3.54.81 4h2l.81-4 1.3-.54 3.43 2.29 1.43-1.43-2.29-3.43.54-1.3zm-8.186-4.672A3.43 3.43 0 0 1 12 8.57 3.44 3.44 0 0 1 15.43 12a3.43 3.43 0 1 1-5.336-2.852zm.956 4.274c.281.188.612.288.95.288A1.7 1.7 0 0 0 13.71 12a1.71 1.71 0 1 0-2.66 1.422z" fill="#c4c4c4"/></svg>
<svg style="left:0;top:0" width="1" height="1"><circle cx="2238.0" cy="1428" r="2.1" fill="#c4c4c4"/><circle cx="2245.5" cy="1428" r="2.1" fill="#c4c4c4"/><circle cx="2253.0" cy="1428" r="2.1" fill="#c4c4c4"/></svg>
<svg style="left:0;top:0" width="1" height="1"><path d="M2287.0 1431.75L2296.5 1422.25L2306.0 1431.75" stroke="#c4c4c4" stroke-width="2.3" fill="none" stroke-linecap="round" stroke-linejoin="round"/></svg>
<svg style="left:2338.5px;top:1419.0px;" width="17.0" height="17.0" viewBox="0 0 17.0 17.0" fill="none"><path d="M0 0L17.0 17.0M17.0 0L0 17.0" stroke="#c4c4c4" stroke-width="2.4" stroke-linecap="butt"/></svg>
<div class="t" style="left:837px;top:1467.500px;font-family:'Liberation Mono', 'DejaVu Sans Mono', monospace;font-size:28px;line-height:38px;letter-spacing:-0.800px;color:#d6d6d6;">[ec2-user 3.5G Retromat]$ mv ../improvement-ideas-01.md .</div>
<div class="t" style="left:837px;top:1506px;font-family:'Liberation Mono', 'DejaVu Sans Mono', monospace;font-size:28px;line-height:38px;letter-spacing:-0.800px;color:#d6d6d6;">[ec2-user 3.5G Retromat]$ </div>
<div class="abs" style="left:1250px;top:1498.5px;width:16px;height:37.0px;background:#ececec;"></div>
<div class="abs" style="left:809px;top:1472px;width:14px;height:14px;border-radius:50%;background:#3d9fd0;"></div>
<div class="abs" style="left:809.500px;top:1510.500px;width:13px;height:13px;border-radius:50%;border:2.500px solid #6c6c6c;"></div>
<div class="abs" style="left:2127.5px;top:1459.5px;width:9.0px;height:6.5px;background:#3d9fd0;"></div>
<div class="abs" style="left:2128px;top:1492px;width:8px;height:12px;background:#7a7a7a;"></div>
<div class="abs" style="left:2156px;top:1460px;width:1px;height:310px;background:#262626;"></div>
<div class="abs" style="left:2157px;top:1504px;width:238px;height:44px;background:#2a2a2a;"></div>
<svg style="left:2178px;top:1467.5px;" width="28" height="32" viewBox="0 0 28 32" fill="none"><path d="M14 1L27 8.500v15L14 31 1 23.500v-15z" stroke="#8e8e8e" stroke-width="1.600" stroke-linejoin="round"/>
<path d="M14 16L27 8.500" stroke="#8e8e8e" stroke-width="1.600"/>
<path d="M14 16.500L27 9v14.500L14 31z" fill="#d8d8d8"/>
<path d="M22 16.500c-2-0.500-3.200 0.500-3.200 1.800 0 2.500 3.500 1.500 3.500 4 0 1.500-1.500 2.200-3.500 1.500M20.500 15.500v10" stroke="#141414" stroke-width="1.500" fill="none"/></svg>
<div class="t " style="left:2213.5px;top:1465.5px;font-size:25.2px;line-height:35px;color:#c8c8c8;">bash</div>
<svg style="left:2178px;top:1510.5px;" width="28" height="32" viewBox="0 0 28 32" fill="none"><path d="M14 1L27 8.500v15L14 31 1 23.500v-15z" stroke="#9a9a9a" stroke-width="1.600" stroke-linejoin="round"/>
<path d="M14 16L27 8.500" stroke="#9a9a9a" stroke-width="1.600"/>
<path d="M14 16.500L27 9v14.500L14 31z" fill="#e4e4e4"/>
<path d="M22 16.500c-2-0.500-3.200 0.500-3.200 1.800 0 2.500 3.500 1.500 3.500 4 0 1.500-1.500 2.200-3.500 1.500M20.500 15.500v10" stroke="#141414" stroke-width="1.500" fill="none"/></svg>
<div class="t " style="left:2213.5px;top:1508.5px;font-size:25.2px;line-height:35px;color:#eaeaea;">bash</div>
<div class="t" style="left:794px;width:1362px;top:1734px;text-align:center;font-size:20px;line-height:28px;color:#b4b4b4;">Ctrl+K to generate a command</div>
<div class="abs" style="left:2395px;top:265px;width:865px;height:1505px;background:#141414;"></div>
<div class="abs" style="left:2394px;top:265px;width:2px;height:1505px;background:#262626;"></div>
<div class="cl" style="left:2396px;top:332.500px;width:864px;height:40px;"><div style="position:absolute;left:-2396px;top:-332.500px;">
<svg style="left:2449px;top:312px;" width="23" height="42" viewBox="0 0 23 42" fill="none"><path d="M16 0L1 24h9L6 42 23 16h-9.500L20 0z" fill="#f5c518"/></svg>
<div class="t " style="left:2491px;top:313.1px;font-size:32.30px;line-height:45px;color:#ececec;font-weight:bold;letter-spacing:0.191px;">MEDIUM PRIORITY (Items 4-7):</div>
</div></div>
<div class="t" style="left:2380px;width:86px;text-align:right;top:381px;font-size:26px;line-height:36px;color:#c8c8c8;">4.</div>
<div class="t " style="left:2472.5px;top:381.0px;font-size:26.00px;line-height:36px;color:#c8c8c8;letter-spacing:0.035px;"><b style="color:#ececec;font-size:25.200px">Migrate Translations to XLIFF Format</b> - Industry standard for</div>
<div class="t " style="left:2472.5px;top:419.0px;font-size:26.00px;line-height:36px;color:#c8c8c8;letter-spacing:-0.714px;">i18n</div>
<div class="t" style="left:2380px;width:86px;text-align:right;top:471.5px;font-size:26px;line-height:36px;color:#c8c8c8;">5.</div>
<div class="t " style="left:2472.5px;top:471.5px;font-size:26.00px;line-height:36px;color:#c8c8c8;letter-spacing:-0.162px;"><b style="color:#ececec;font-size:25.200px">Add Missing Assets Directory Structure</b> - Standard frontend</div>
<div class="t " style="left:2472.5px;top:509.5px;font-size:26.00px;line-height:36px;color:#c8c8c8;letter-spacing:-0.022px;">setup</div>
<div class="t" style="left:2380px;width:86px;text-align:right;top:561px;font-size:26px;line-height:36px;color:#c8c8c8;">6.</div>
<div class="t " style="left:2472.5px;top:561.0px;font-size:26.00px;line-height:36px;color:#c8c8c8;letter-spacing:-0.043px;"><b style="color:#ececec;font-size:25.200px">Optimize Service Configuration</b> - Better performance and</div>
<div class="t " style="left:2472.5px;top:599.0px;font-size:26.00px;line-height:36px;color:#c8c8c8;letter-spacing:-0.094px;">practices</div>
<div class="t" style="left:2380px;width:86px;text-align:right;top:651px;font-size:26px;line-height:36px;color:#c8c8c8;">7.</div>
<div class="t " style="left:2472.5px;top:651.0px;font-size:26.00px;line-height:36px;color:#c8c8c8;letter-spacing:-0.147px;"><b style="color:#ececec;font-size:25.200px">Standardize Template Naming</b> - Snake_case conventions</div>
<svg style="left:2445px;top:736px;" width="33" height="38" viewBox="0 0 33 38" fill="none"><rect x="1" y="4" width="31" height="33" rx="3" fill="#c9a06a"/>
<rect x="4.500" y="8" width="24" height="26.500" fill="#f2f2f2"/>
<rect x="9.500" y="1" width="14" height="8" rx="2" fill="#9aa0a6"/>
<path d="M8 14h17M8 18.500h17M8 23h17M8 27.500h17" stroke="#b8b8b8" stroke-width="1.800"/></svg>
<div class="t " style="left:2490px;top:731.5px;font-size:32.30px;line-height:45px;color:#ececec;font-weight:bold;letter-spacing:0.001px;">LOW PRIORITY (Items 8-12):</div>
<div class="t" style="left:2380px;width:86px;text-align:right;top:799px;font-size:26px;line-height:36px;color:#c8c8c8;">8.</div>
<div class="t " style="left:2472.5px;top:799.0px;font-size:26.00px;line-height:36px;color:#c8c8c8;letter-spacing:0.193px;">Environment Configuration Improvements</div>
<div class="t" style="left:2380px;width:86px;text-align:right;top:850.5px;font-size:26px;line-height:36px;color:#c8c8c8;">9.</div>
<div class="t " style="left:2472.5px;top:850.5px;font-size:26.00px;line-height:36px;color:#c8c8c8;letter-spacing:0.267px;">Configuration Optimizations</div>
<div class="t" style="left:2380px;width:86px;text-align:right;top:901.5px;font-size:26px;line-height:36px;color:#c8c8c8;">10.</div>
<div class="t " style="left:2472.5px;top:901.5px;font-size:26.00px;line-height:36px;color:#c8c8c8;letter-spacing:-0.108px;">Form Organization Review</div>
<div class="t" style="left:2380px;width:86px;text-align:right;top:952.5px;font-size:26px;line-height:36px;color:#c8c8c8;">11.</div>
<div class="t " style="left:2472.5px;top:952.5px;font-size:26.00px;line-height:36px;color:#c8c8c8;letter-spacing:0.022px;">Testing Structure Enhancement</div>
<div class="t" style="left:2380px;width:86px;text-align:right;top:1003px;font-size:26px;line-height:36px;color:#c8c8c8;">12.</div>
<div class="t " style="left:2472.5px;top:1003.0px;font-size:26.00px;line-height:36px;color:#c8c8c8;letter-spacing:0.103px;">Performance Configuration</div>
<div class="t " style="left:2440px;top:1058.5px;font-size:26.00px;line-height:36px;color:#c8c8c8;letter-spacing:-0.019px;">The document includes a <b style="color:#ececec;font-size:25.200px">5-week implementation roadmap</b>, clear</div>
<div class="t " style="left:2440px;top:1097.5px;font-size:26.00px;line-height:36px;color:#c8c8c8;letter-spacing:-0.147px;"><b style="color:#ececec;font-size:25.200px">success metrics</b>, and notes that your project already follows many</div>
<div class="t " style="left:2440px;top:1136.5px;font-size:26.00px;line-height:36px;color:#c8c8c8;letter-spacing:-0.010px;">best practices well - you have excellent quality tooling already in</div>
<div class="t " style="left:2440px;top:1175.0px;font-size:26.00px;line-height:36px;color:#c8c8c8;letter-spacing:-0.414px;">place with PHP-CS-Fixer and PHPStan.</div>
<div class="t " style="left:2440px;top:1227.5px;font-size:26.00px;line-height:36px;color:#c8c8c8;letter-spacing:-0.013px;">The biggest architectural change needed is moving from the non-</div>
<div class="t " style="left:2440px;top:1266.0px;font-size:26.00px;line-height:36px;color:#c8c8c8;letter-spacing:0.002px;">standard</div>
<div class="abs" style="left:2548px;top:1267px;width:123.5px;height:33.5px;background:#0c0c0c;border-radius:7px;"></div>
<div class="t " style="left:2554.5px;top:1269.0px;font-size:23px;line-height:32px;color:#8db3d6;font-family:'Liberation Mono', 'DejaVu Sans Mono', monospace;">backend/</div>
<div class="t " style="left:2678.5px;top:1266.0px;font-size:26.00px;line-height:36px;color:#c8c8c8;letter-spacing:0.140px;">subdirectory structure to the standard</div>
<div class="t " style="left:2440px;top:1305.0px;font-size:26.00px;line-height:36px;color:#c8c8c8;letter-spacing:0.127px;">Symfony root layout, but most other improvements are</div>
<div class="t " style="left:2440px;top:1343.5px;font-size:26.00px;line-height:36px;color:#c8c8c8;letter-spacing:-0.125px;">incremental and won't cause breaking changes.</div>
<svg style="left:2440px;top:1397px;" width="32" height="32" viewBox="0 0 32 32" fill="none"><path d="M3 20l9-7 7 8-9 8z" fill="#3f9ad6"/><path d="M14 9l9-6 6 8-9 7z" fill="#55b5e8"/>
<circle cx="20" cy="12" r="4.500" fill="#8fd16a"/><circle cx="9" cy="23" r="4" fill="#7cc45a"/><circle cx="24" cy="6" r="2.500" fill="#eaf6ff"/></svg>
<svg style="left:2473px;top:1397px;" width="32" height="32" viewBox="0 0 32 32" fill="none"><path d="M3 20l9-7 7 8-9 8z" fill="#3f9ad6"/><path d="M14 9l9-6 6 8-9 7z" fill="#55b5e8"/>
<circle cx="20" cy="12" r="4.500" fill="#8fd16a"/><circle cx="9" cy="23" r="4" fill="#7cc45a"/><circle cx="24" cy="6" r="2.500" fill="#eaf6ff"/></svg>
<svg style="left:2434px;top:1486px;" width="16" height="16" viewBox="0 0 16 16" fill="none"><path d="M0 2h16M0 6.500h16M0 11h16M0 15.500h16" stroke="#8e8e8e" stroke-width="1.800"/></svg>
<div class="t " style="left:2456.5px;top:1481.0px;font-size:21px;line-height:29px;color:#8e8e8e;">Review changes</div>
<svg style="left:3038px;top:1481px;" width="24" height="26" viewBox="0 0 24 26" fill="none"><path d="M2 12h5v13H2zM7 13l5-11c2.500 0 3.500 2 3 4l-1 5h6c2 0 3 1.500 2.500 3l-2 8c-0.500 1.500-1.500 2-3 2H7" stroke="#7c7c7c" stroke-width="2" stroke-linejoin="round"/></svg>
<svg style="left:3084px;top:1481px;" width="24" height="26" viewBox="0 0 24 26" fill="none"><path d="M22 14h-5V1h5zM17 13l-5 11c-2.500 0-3.500-2-3-4l1-5H4c-2 0-3-1.500-2.500-3l2-8c0.500-1.500 1.500-2 3-2H17" stroke="#7c7c7c" stroke-width="2" stroke-linejoin="round"/></svg>
<svg style="left:3135px;top:1482px;" width="24" height="26" viewBox="0 0 24 26" fill="none"><rect x="7" y="7" width="15" height="17" rx="2" stroke="#7c7c7c" stroke-width="2.200"/><path d="M3 18V4a2 2 0 0 1 2-2h12" stroke="#7c7c7c" stroke-width="2.200"/></svg>
<svg style="left:0;top:0" width="1" height="1"><circle cx="3192.0" cy="1496" r="2" fill="#7c7c7c"/><circle cx="3199.5" cy="1496" r="2" fill="#7c7c7c"/><circle cx="3207.0" cy="1496" r="2" fill="#7c7c7c"/></svg>
<div class="abs" style="left:2428.500px;top:1505.500px;width:800px;height:70px;background:#191919;border:2px solid #252525;border-radius:13px;"></div>
<svg style="left:0;top:0" width="1" height="1"><path d="M2455.75 1525.0L2462.25 1531.5L2455.75 1538.0" stroke="#8a8a8a" stroke-width="1.8" fill="none" stroke-linecap="round" stroke-linejoin="round"/></svg>
<div class="t " style="left:2477.5px;top:1517.0px;font-size:21.60px;line-height:30px;color:#a4a4a4;letter-spacing:0.011px;">1 file edited</div>
<div class="t " style="left:2598px;top:1517.0px;font-size:21.6px;line-height:30px;color:#86ad6e;">+143</div>
<div class="t " style="left:2652px;top:1517.0px;font-size:21.6px;line-height:30px;color:#c4565e;">-1</div>
<div class="abs" style="left:2416.500px;top:1559.500px;width:823.500px;height:189.500px;background:#1d1d1d;border:2px solid #2a2a2a;border-radius:17px;"></div>
<div class="abs" style="left:2434px;top:1576px;width:171.500px;height:36px;border:2px solid #353535;border-radius:8px;"></div>
<div class="t " style="left:2442.5px;top:1576.5px;font-size:23px;line-height:32px;color:#8c8c8c;">@</div>
<div class="t " style="left:2471.5px;top:1578.5px;font-size:22px;line-height:30px;color:#d6d6d6;letter-spacing:-0.1px;">Add Context</div>
<div class="t " style="left:2434px;top:1625.5px;font-size:23.6px;line-height:33px;color:#6c6c6c;">Plan, search, build anything</div>
<div class="abs" style="left:2434px;top:1696.500px;width:181px;height:35.500px;background:#2b2b2b;border-radius:18px;"></div>
<svg style="left:2445px;top:1707px;" width="22" height="13" viewBox="0 0 22 13" fill="none"><path d="M11 6.500C8.500 2.500 6.500 1.500 5 1.500a5 5 0 0 0 0 10c1.500 0 3.500-1 6-5zm0 0c2.500 4 4.500 5 6 5a5 5 0 0 0 0-10c-1.500 0-3.500 1-6 5z" stroke="#b4b4b4" stroke-width="2"/></svg>
<div class="t " style="left:2473.5px;top:1698.5px;font-size:22.5px;line-height:31px;color:#d4d4d4;letter-spacing:-0.2px;">Agent</div>
<div class="t " style="left:2539.5px;top:1703.0px;font-size:17.5px;line-height:24px;color:#7e7e7e;">Ctrl+I</div>
<svg style="left:0;top:0" width="1" height="1"><path d="M2594.5 1716.5L2599.5 1711.5L2604.5 1716.5" stroke="#6e6e6e" stroke-width="1.8" fill="none" stroke-linecap="round" stroke-linejoin="round"/></svg>
<svg style="left:2632px;top:1702px;" width="26" height="24" viewBox="0 0 26 24" fill="none"><path d="M9 3a4 4 0 0 0-4 4 4.500 4.500 0 0 0-3 4.500c0 2 1 3.500 2.500 4.200A4.500 4.500 0 0 0 9 20.500c1.500 0 2.500-0.500 3.500-1.500V5C11.500 3.800 10.500 3 9 3z" stroke="#b4b4b4" stroke-width="2" stroke-linejoin="round"/><path d="M12.500 6c1-2 3-3 5-2.500 2 0.500 3 2 3 4 2 0.500 3.500 2.500 3 5-0.300 2-1.500 3-3 3.500 0 2-1.500 4-4 4-1.500 0-3-1-4-2.500" stroke="#b4b4b4" stroke-width="2" stroke-linejoin="round"/><path d="M16 10c1 0 2 1 2 2.500M7 11c1.500 0 2.500 1 2.500 2.500" stroke="#b4b4b4" stroke-width="1.800"/></svg>
<div class="t " style="left:2662.5px;top:1699.5px;font-size:22.6px;line-height:31px;color:#c2c2c2;">claude-4-sonnet</div>
<svg style="left:0;top:0" width="1" height="1"><path d="M2833 1716.5L2838 1711.5L2843 1716.5" stroke="#4a4a4a" stroke-width="1.8" fill="none" stroke-linecap="round" stroke-linejoin="round"/></svg>
<svg style="left:3143px;top:1704px;" width="26" height="20" viewBox="0 0 26 20" fill="none"><rect x="1.200" y="1.200" width="23.600" height="17.600" rx="2" stroke="#a4a4a4" stroke-width="2.300"/><path d="M3 16l6-6 4 4 4-3 6 5v2H3z" fill="#a4a4a4"/><circle cx="8" cy="6.500" r="2" fill="#a4a4a4"/></svg>
<div class="abs" style="left:3187.500px;top:1697px;width:34px;height:34px;border-radius:50%;background:#5c5c5c;"></div>
<svg style="left:3195px;top:1704px;" width="19" height="20" viewBox="0 0 19 20" fill="none"><path d="M9.500 18V3M3 9l6.500-6.500L16 9" stroke="#262626" stroke-width="2.200" stroke-linecap="round" stroke-linejoin="round"/></svg>
<div class="abs" style="left:2396px;top:266px;width:864px;height:66.5px;background:#141414;"></div>
<div class="abs" style="left:2420.500px;top:281px;width:439px;height:42.500px;background:#262626;border-radius:9px;"></div>
<div class="t " style="left:2436px;top:285.5px;font-size:23.60px;line-height:33px;color:#e6e6e6;letter-spacing:0.012px;">Create Symfony 5.4 best practices rule</div>
<svg style="left:2979.5px;top:286.0px;" width="33" height="33" viewBox="0 0 24 24" fill="none"><path d="M19.85 8.75l4.15.83v4.84l-4.15.83 2.35 3.52-3.43 3.43-3.52-2.35-.83 4.15H9.58l-.83-4.15-3.52 2.35-3.43-3.43 2.35-3.52L0 14.42V9.58l4.15-.83L1.8 5.23 5.23 1.8l3.52 2.35L9.58 0h4.84l.83 4.15 3.52-2.35 3.43 3.43-2.35 3.52zm-1.57 5.07l4-.81v-2l-4-.81-.54-1.3 2.29-3.43-1.43-1.43-3.43 2.29-1.3-.54-.81-4h-2l-.81 4-1.3.54-3.43-2.29-1.43 1.43L6.38 8.9l-.54 1.3-4 .81v2l4 .81.54 1.3-2.29 3.43 1.43 1.43 3.43-2.29 1.3.54.81 4h2l.81-4 1.3-.54 3.43 2.29 1.43-1.43-2.29-3.43.54-1.3zm-8.186-4.672A3.43 3.43 0 0 1 12 8.57 3.44 3.44 0 0 1 15.43 12a3.43 3.43 0 1 1-5.336-2.852zm.956 4.274c.281.188.612.288.95.288A1.7 1.7 0 0 0 13.71 12a1.71 1.71 0 1 0-2.66 1.422z" fill="#9a9a9a"/></svg>
<svg style="left:0;top:0" width="1" height="1"><path d="M3040.500 293v19M3031 302.500h19" stroke="#9a9a9a" stroke-width="2.200"/></svg>
<svg style="left:3070px;top:291px;" width="30" height="22" viewBox="0 0 30 22" fill="none"><path d="M8 20.500a6 6 0 0 1-1-12 8.500 8.500 0 0 1 16.500 1.500 5.300 5.300 0 0 1-0.500 10.500z" stroke="#9a9a9a" stroke-width="2.200" stroke-linejoin="round"/></svg>
<svg style="left:3113px;top:289px;" width="28" height="28" viewBox="0 0 28 28" fill="none"><path d="M5.500 8a11 11 0 1 1-2 8" stroke="#9a9a9a" stroke-width="2.200" stroke-linecap="round"/><path d="M2 5v6.500h6.500" stroke="#9a9a9a" stroke-width="2.200" stroke-linecap="round" stroke-linejoin="round"/><path d="M14 8v7l4.500 3" stroke="#9a9a9a" stroke-width="2.200" stroke-linecap="round"/></svg>
<svg style="left:0;top:0" width="1" height="1"><circle cx="3164.5" cy="303" r="2.1" fill="#9a9a9a"/><circle cx="3172" cy="303" r="2.1" fill="#9a9a9a"/><circle cx="3179.5" cy="303" r="2.1" fill="#9a9a9a"/></svg>
<svg style="left:3210px;top:295px;" width="16" height="16" viewBox="0 0 16 16" fill="none"><path d="M0 0L16 16M16 0L0 16" stroke="#9a9a9a" stroke-width="2.2" stroke-linecap="butt"/></svg>
<div class="abs" style="left:112px;top:1770px;width:3148px;height:44px;background:#141414;"></div>
<div class="abs" style="left:112px;top:1770px;width:3148px;height:1px;background:#2a2a2a;"></div>
<div class="abs" style="left:112px;top:1770px;width:68px;height:44px;background:#a6d3e4;"></div>
<svg style="left:136px;top:1779px;" width="22" height="24" viewBox="0 0 22 24" fill="none"><path d="M3 9l7 6.500-7 6.500M19 2l-7 6.500 7 6.500" stroke="#1a2a33" stroke-width="2.200" stroke-linecap="round" stroke-linejoin="round"/></svg>
<svg style="left:195px;top:1778px;" width="20" height="28" viewBox="0 0 20 28" fill="none"><circle cx="5" cy="5" r="3.300" stroke="#969696" stroke-width="2"/><circle cx="5" cy="23" r="3.300" stroke="#969696" stroke-width="2"/><circle cx="16" cy="9" r="3.300" stroke="#969696" stroke-width="2"/><path d="M5 8.500v11M16 12.500c0 5-11 3-11 8" stroke="#969696" stroke-width="2"/></svg>
<div class="t " style="left:225.5px;top:1775.0px;font-size:24.50px;line-height:34px;color:#969696;letter-spacing:0.113px;">symfony-mdc-experiment</div>
<svg style="left:517px;top:1779px;" width="26" height="24" viewBox="0 0 26 24" fill="none"><path d="M3.500 10a9.500 9.500 0 0 1 17.500-2.500M22.500 14a9.500 9.500 0 0 1-17.500 2.500" stroke="#969696" stroke-width="2.200" stroke-linecap="round"/><path d="M21.500 2v6h-6M4.500 22v-6h6" stroke="#969696" stroke-width="2.200" stroke-linecap="round" stroke-linejoin="round"/></svg>
<svg style="left:573px;top:1779px;" width="25" height="25" viewBox="0 0 25 25" fill="none"><circle cx="12.500" cy="12.500" r="10.500" stroke="#969696" stroke-width="2"/><path d="M8 8l9 9M17 8l-9 9" stroke="#969696" stroke-width="2"/></svg>
<div class="t " style="left:605px;top:1775.0px;font-size:24.5px;line-height:34px;color:#969696;">0</div>
<svg style="left:626px;top:1779px;" width="25" height="24" viewBox="0 0 25 24" fill="none"><path d="M12.500 2.500L23.500 22h-22z" stroke="#969696" stroke-width="2" stroke-linejoin="round"/><path d="M12.500 9.500v6.500M12.500 18v2" stroke="#969696" stroke-width="2"/></svg>
<div class="t " style="left:657.5px;top:1775.0px;font-size:24.5px;line-height:34px;color:#969696;">0</div>
<div class="t " style="left:2444.5px;top:1775.5px;font-size:24.00px;line-height:33px;color:#666666;letter-spacing:-0.165px;"><s>Cursor Tab</s></div>
<div class="t " style="left:2593px;top:1775.0px;font-size:24.50px;line-height:34px;color:#969696;letter-spacing:-0.773px;">Ln 1, Col 1</div>
<div class="t " style="left:2736.3px;top:1775.0px;font-size:23.97px;line-height:34px;color:#969696;letter-spacing:-0.900px;">Spaces: 2</div>
<div class="t " style="left:2868px;top:1775.0px;font-size:24.50px;line-height:34px;color:#969696;letter-spacing:-0.624px;">UTF-8</div>
<div class="t " style="left:2966.8px;top:1775.0px;font-size:23.65px;line-height:34px;color:#969696;letter-spacing:-0.900px;">LF</div>
<div class="t " style="left:3023.5px;top:1774.0px;font-size:24.5px;line-height:34px;color:#969696;letter-spacing:6px;">{}</div>
<div class="t " style="left:3061px;top:1775.0px;font-size:24.50px;line-height:34px;color:#969696;letter-spacing:-0.064px;">Markdown</div>
<svg style="left:3204px;top:1778px;" width="28" height="28" viewBox="0 0 28 28" fill="none"><path d="M5 20.500c2-2 2.500-4 2.500-8 0-4.500 2.500-7.500 6-7.500s6 3 6 7.500c0 4 0.500 6 2.500 8z" stroke="#969696" stroke-width="2.200" stroke-linejoin="round"/><path d="M11 23.500a2.800 2.800 0 0 0 5 0" stroke="#969696" stroke-width="2.200"/><circle cx="20.500" cy="6" r="4.500" fill="#969696" stroke="#141414" stroke-width="1.500"/></svg>

</div></div></div>
</body></html>
